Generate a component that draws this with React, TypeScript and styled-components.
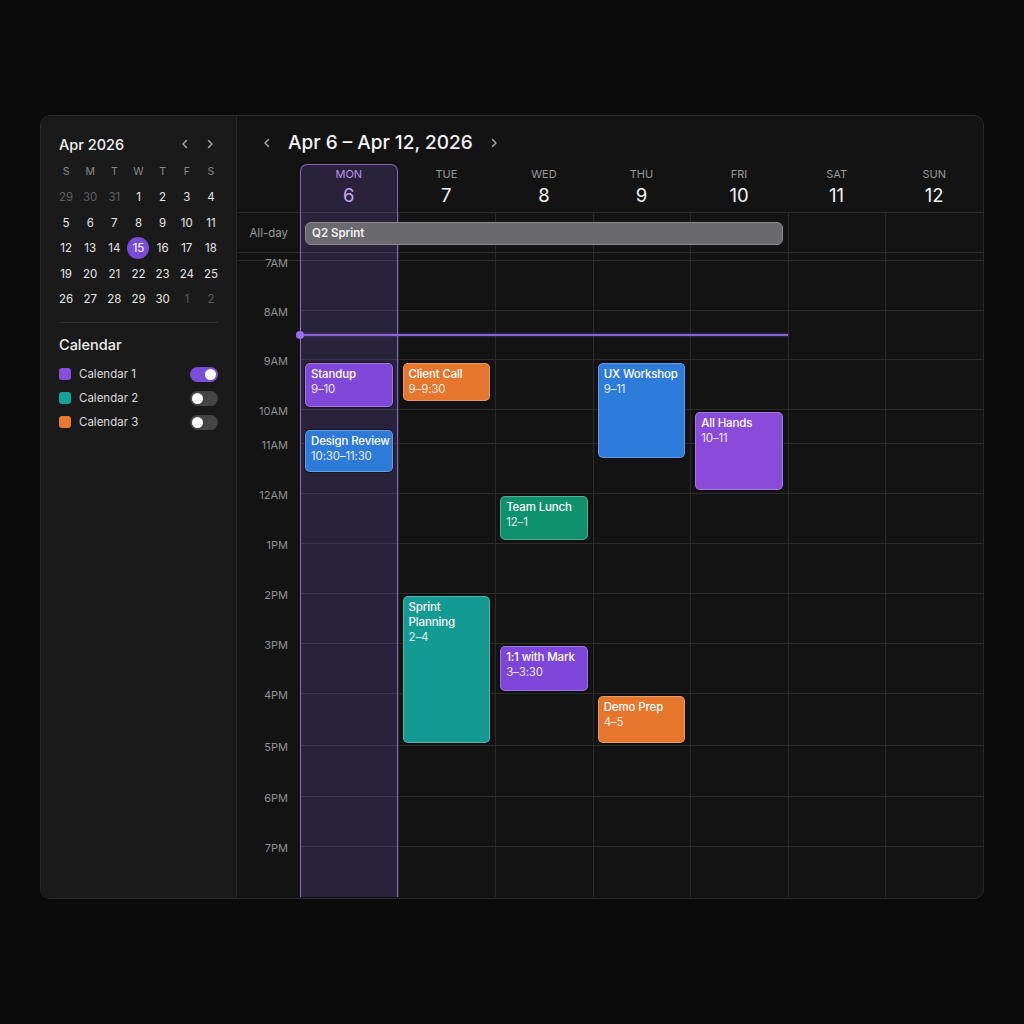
import React from "react";
import styled, { createGlobalStyle } from "styled-components";

const GlobalStyle = createGlobalStyle`
  html, body { margin: 0; padding: 0; background: #0b0b0b; }
  body { font-family: Inter, "Noto Sans", "Liberation Sans", sans-serif; color: #ececec; }
  * { box-sizing: border-box; }
`;

// pixel heights of the hour rows, 7AM .. 7PM
const hourRows = [
    {label: "7AM", h: 50}, {label: "8AM", h: 49}, {label: "9AM", h: 50}, {label: "10AM", h: 34},
    {label: "11AM", h: 50}, {label: "12AM", h: 50}, {label: "1PM", h: 50}, {label: "2PM", h: 50},
    {label: "3PM", h: 50}, {label: "4PM", h: 52}, {label: "5PM", h: 51}, {label: "6PM", h: 50},
    {label: "7PM", h: 51},
];

const days = [
    {name: "MON", num: 6, today: true}, {name: "TUE", num: 7}, {name: "WED", num: 8},
    {name: "THU", num: 9}, {name: "FRI", num: 10}, {name: "SAT", num: 11}, {name: "SUN", num: 12},
];

type CalEvent = { day: number; title: string; time: string; top: number; height: number; color: string };

const events: CalEvent[] = [
    {day: 0, title: "Standup", time: "9–10", top: 103, height: 44, color: "#8048d9"},
    {day: 0, title: "Design Review", time: "10:30–11:30", top: 170, height: 42, color: "#2d7ad9"},
    {day: 1, title: "Client Call", time: "9–9:30", top: 103, height: 38, color: "#e5762b"},
    {day: 1, title: "Sprint Planning", time: "2–4", top: 336, height: 147, color: "#129a93"},
    {day: 2, title: "Team Lunch", time: "12–1", top: 236, height: 44, color: "#0f916b"},
    {day: 2, title: "1:1 with Mark", time: "3–3:30", top: 386, height: 45, color: "#7d45d8"},
    {day: 3, title: "UX Workshop", time: "9–11", top: 103, height: 95, color: "#2d7bdb"},
    {day: 3, title: "Demo Prep", time: "4–5", top: 436, height: 47, color: "#e5762b"},
    {day: 4, title: "All Hands", time: "10–11", top: 152, height: 78, color: "#8a4bdb"},
];

const calendars = [
    {name: "Calendar 1", color: "#8450db", on: true},
    {name: "Calendar 2", color: "#14a39c", on: false},
    {name: "Calendar 3", color: "#ea7a30", on: false},
];

const miniDays: { n: number; muted?: boolean }[] = [
    {n: 29, muted: true}, {n: 30, muted: true}, {n: 31, muted: true},
    ...Array.from({length: 30}, (_, i) => ({n: i + 1})),
    {n: 1, muted: true}, {n: 2, muted: true},
];

const Page = styled.div`
  width: 1024px;
  height: 1024px;
  padding: 115px 40px 0;
  background: #0b0b0b;
`;

const Panel = styled.div`
  display: flex;
  height: 784px;
  border: 1px solid #2a2a2c;
  border-radius: 10px;
  overflow: hidden;
  background: #131313;
`;

const Sidebar = styled.aside`
  width: 196px;
  flex: none;
  display: flex;
  flex-direction: column;
  padding: 19px 18px 0 18px;
  background: #1a1a1b;
  border-right: 1px solid #2a2a2b;
`;

const MonthHeader = styled.div`
  display: flex;
  align-items: center;
  justify-content: space-between;
  height: 18px;
`;

const MonthTitle = styled.div`
  font-size: 14.5px;
  font-weight: 500;
  color: #f2f2f2;
`;

const NavPair = styled.div`
  display: flex;
  gap: 13px;
  margin-right: 2px;
`;

const NavIcon = styled.svg`
  width: 12px;
  height: 12px;
  fill: none;
  stroke: #a3a3a3;
  stroke-width: 1.5;
  stroke-linecap: round;
  stroke-linejoin: round;
`;

const MiniGrid = styled.div`
  display: grid;
  grid-template-columns: repeat(7, 1fr);
  grid-auto-rows: 25.5px;
  margin: 6px -5px 0;
`;

const Weekday = styled.div`
  display: flex;
  align-items: center;
  justify-content: center;
  font-size: 10.5px;
  color: #8a8a8a;
`;

const MiniDay = styled.div<{ $muted?: boolean; $selected?: boolean }>`
  display: flex;
  align-items: center;
  justify-content: center;
  font-size: 11.5px;
  color: ${p => p.$muted ? "#5e5e5e" : "#e8e8e8"};
  > span {
    width: 22px;
    height: 22px;
    border-radius: 50%;
    display: flex;
    align-items: center;
    justify-content: center;
    background: ${p => p.$selected ? "#7b4bd8" : "transparent"};
    color: ${p => p.$selected ? "#ffffff" : "inherit"};
  }
`;

const Divider = styled.div`
  height: 1px;
  margin-top: 10px;
  background: #2d2d2e;
`;

const SectionTitle = styled.div`
  margin-top: 13px;
  font-size: 14.5px;
  line-height: 18px;
  font-weight: 500;
  color: #f0f0f0;
`;

const CalList = styled.div`
  margin-top: 8px;
  display: flex;
  flex-direction: column;
`;

const CalRow = styled.div`
  display: flex;
  align-items: center;
  height: 24px;
`;

const Swatch = styled.div<{ $color: string }>`
  width: 12px;
  height: 12px;
  border-radius: 3px;
  background: ${p => p.$color};
`;

const CalName = styled.div`
  flex: 1;
  margin-left: 8px;
  font-size: 11.5px;
  color: #dadada;
`;

const Toggle = styled.div<{ $on: boolean }>`
  width: 28px;
  height: 15px;
  border-radius: 8px;
  padding: 2px;
  display: flex;
  justify-content: ${p => p.$on ? "flex-end" : "flex-start"};
  background: ${p => p.$on ? "#7b4fd8" : "#454547"};
  &::after {
    content: "";
    width: 11px;
    height: 11px;
    border-radius: 50%;
    background: #ffffff;
  }
`;

const Main = styled.main`
  flex: 1;
  display: flex;
  flex-direction: column;
  min-width: 0;
`;

const TitleBar = styled.div`
  height: 48px;
  flex: none;
  display: flex;
  align-items: center;
  gap: 15px;
  padding: 6px 0 0 24px;
`;

const WeekTitle = styled.div`
  font-size: 19px;
  line-height: 24px;
  font-weight: 500;
  color: #f4f4f4;
`;

const Grid = styled.div`
  flex: 1;
  display: grid;
  grid-template-columns: 63px repeat(7, 1fr);
  grid-template-rows: 48px 41px 7px ${hourRows.map(r => `${r.h}px`).join(" ")};
`;

const Placed = styled.div<{ $row: string; $col: string }>`
  grid-row: ${p => p.$row};
  grid-column: ${p => p.$col};
`;

const DayHead = styled(Placed)<{ $today?: boolean }>`
  display: flex;
  flex-direction: column;
  align-items: center;
  padding-top: 4px;
  .name {
    font-size: 11px;
    line-height: 13px;
    color: ${p => p.$today ? "#b895ea" : "#9a9a9a"};
  }
  .num {
    margin-top: 3px;
    font-size: 18.5px;
    line-height: 22px;
    color: ${p => p.$today ? "#c6a6f4" : "#f4f4f4"};
  }
`;

const AllDayLabel = styled(Placed)`
  border-top: 1px solid #2b2b2b;
  border-bottom: 1px solid #2b2b2b;
  display: flex;
  align-items: center;
  justify-content: flex-end;
  padding: 1px 12px 0 0;
  font-size: 11.5px;
  color: #9a9a9a;
`;

const AllDayCell = styled(Placed)`
  border-top: 1px solid #2b2b2b;
  border-bottom: 1px solid #2b2b2b;
  border-left: 1px solid #2b2b2b;
`;

const SpacerCell = styled(Placed)`
  border-left: 1px solid #2b2b2b;
`;

const HourLabel = styled(Placed)<{ $first?: boolean }>`
  border-top: ${p => p.$first ? "1px solid #2b2b2b" : "none"};
  padding-right: 12px;
  text-align: right;
  font-size: 11px;
  line-height: 14px;
  color: #919191;
  > span {
    display: block;
    margin-top: -5px;
  }
`;

const HourCell = styled(Placed)`
  border-top: 1px solid #2b2b2b;
  border-left: 1px solid #2b2b2b;
`;

const TodayColumn = styled(Placed)`
  border: 1px solid rgba(165, 125, 240, 0.75);
  border-bottom: none;
  border-radius: 7px 7px 0 0;
  background: rgba(135, 95, 220, 0.2);
  pointer-events: none;
`;

const AllDayBar = styled(Placed)`
  align-self: center;
  margin: 1px 5px 0;
  height: 23px;
  display: flex;
  align-items: center;
  padding-left: 6px;
  border-radius: 6px;
  background: #6a6a6e;
  border: 1px solid #8b8b90;
  font-size: 11.5px;
  font-weight: 600;
  color: #f1f1f1;
`;

const Layer = styled(Placed)`
  position: relative;
  pointer-events: none;
`;

const NowLine = styled.div`
  position: absolute;
  left: 0;
  right: 0;
  top: 74px;
  height: 1.5px;
  background: #8a60d6;
  box-shadow: 0 0 3px rgba(150, 100, 240, 0.5);
  &::before {
    content: "";
    position: absolute;
    left: -4px;
    top: -3.5px;
    width: 8px;
    height: 8px;
    border-radius: 50%;
    background: #9a6ef0;
  }
`;

const EventCard = styled.div<{ $color: string }>`
  position: absolute;
  left: 5px;
  right: 5px;
  padding: 3px 1px 0 5px;
  border-radius: 5px;
  background: ${p => p.$color};
  border: 1px solid rgba(255, 255, 255, 0.28);
  box-shadow: 0 0 0 1px rgba(0, 0, 0, 0.45);
  overflow: hidden;
  font-size: 11.5px;
  line-height: 15px;
  letter-spacing: -0.15px;
  color: #ffffff;
  .title { font-weight: 500; }
  .time { color: rgba(255, 255, 255, 0.88); }
`;

const Chevron = ({dir}: { dir: "left" | "right" }) => (
    <NavIcon viewBox="0 0 12 12">
        <path d={dir === "left" ? "M7.5 2.5 L4 6 L7.5 9.5" : "M4.5 2.5 L8 6 L4.5 9.5"}/>
    </NavIcon>
);

function App() {
    const lastRow = 3 + hourRows.length;
    return (
        <Page>
            <GlobalStyle/>
            <Panel>
                <Sidebar>
                    <MonthHeader>
                        <MonthTitle>Apr 2026</MonthTitle>
                        <NavPair>
                            <Chevron dir="left"/>
                            <Chevron dir="right"/>
                        </NavPair>
                    </MonthHeader>
                    <MiniGrid>
                        {["S", "M", "T", "W", "T", "F", "S"].map((d, i) => <Weekday key={i}>{d}</Weekday>)}
                        {miniDays.map((d, i) =>
                            <MiniDay key={i} $muted={d.muted} $selected={!d.muted && d.n === 15}>
                                <span>{d.n}</span>
                            </MiniDay>)}
                    </MiniGrid>
                    <Divider/>
                    <SectionTitle>Calendar</SectionTitle>
                    <CalList>
                        {calendars.map(c => <CalRow key={c.name}>
                            <Swatch $color={c.color}/>
                            <CalName>{c.name}</CalName>
                            <Toggle $on={c.on}/>
                        </CalRow>)}
                    </CalList>
                </Sidebar>
                <Main>
                    <TitleBar>
                        <Chevron dir="left"/>
                        <WeekTitle>Apr 6 – Apr 12, 2026</WeekTitle>
                        <Chevron dir="right"/>
                    </TitleBar>
                    <Grid>
                        <AllDayLabel $row="2" $col="1">All-day</AllDayLabel>
                        {days.map((d, i) => <AllDayCell key={"a" + i} $row="2" $col={String(i + 2)}/>)}
                        {days.map((d, i) => <SpacerCell key={"s" + i} $row="3" $col={String(i + 2)}/>)}
                        {hourRows.map((r, ri) => <React.Fragment key={r.label}>
                            <HourLabel $row={String(ri + 4)} $col="1" $first={ri === 0}>
                                <span>{r.label}</span>
                            </HourLabel>
                            {days.map((d, i) =>
                                <HourCell key={i} $row={String(ri + 4)} $col={String(i + 2)}/>)}
                        </React.Fragment>)}

                        <TodayColumn $row="1 / -1" $col="2"/>

                        {days.map((d, i) =>
                            <DayHead key={"h" + i} $row="1" $col={String(i + 2)} $today={d.today}>
                                <span className="name">{d.name}</span>
                                <span className="num">{d.num}</span>
                            </DayHead>)}

                        <AllDayBar $row="2" $col="2 / 7">Q2 Sprint</AllDayBar>

                        <Layer $row={`4 / ${lastRow + 1}`} $col="2 / 7">
                            <NowLine/>
                        </Layer>

                        {days.map((d, i) =>
                            <Layer key={"l" + i} $row={`4 / ${lastRow + 1}`} $col={String(i + 2)}>
                                {events.filter(e => e.day === i).map(e =>
                                    <EventCard key={e.title} $color={e.color}
                                               style={{top: e.top, height: e.height}}>
                                        <div className="title">{e.title}</div>
                                        <div className="time">{e.time}</div>
                                    </EventCard>)}
                            </Layer>)}
                    </Grid>
                </Main>
            </Panel>
        </Page>
    );
}

export default App;
